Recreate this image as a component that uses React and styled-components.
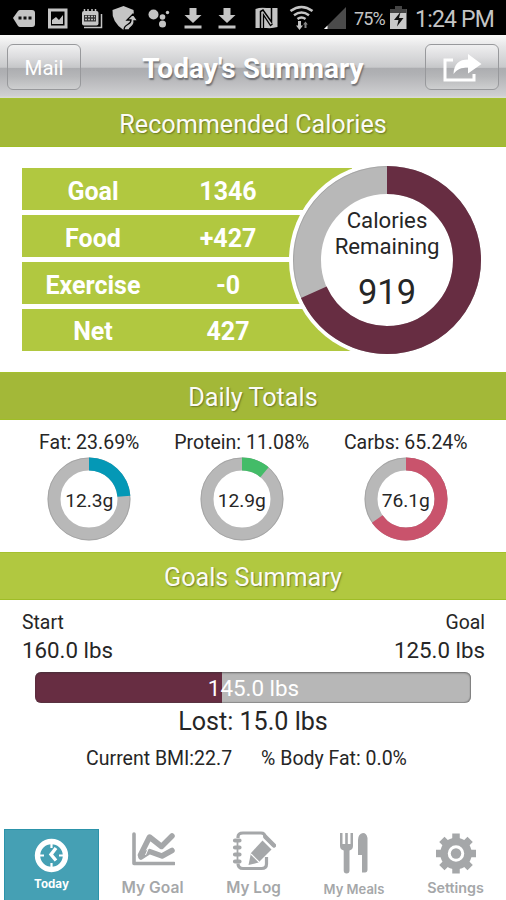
import React from "react";
import styled, { createGlobalStyle } from "styled-components";

const GlobalStyle = createGlobalStyle`
  * { box-sizing: border-box; }
  body { margin: 0; background: #fff; }
`;

const Screen = styled.div`
  width: 506px;
  height: 900px;
  display: flex;
  flex-direction: column;
  overflow: hidden;
  background: #fff;
  color: #262626;
  font-family: Roboto, "Liberation Sans", sans-serif;
`;

const Label = styled.span`
  display: block;
  white-space: nowrap;
  font-size: ${(p) => p.$size}px;
  line-height: ${(p) => p.$line || p.$size}px;
  font-weight: ${(p) => p.$weight || 400};
  letter-spacing: ${(p) => p.$track || 0}px;
`;

const StatusBar = styled.div`
  height: 35px;
  flex: none;
  display: flex;
  background: #000;
  color: #c4c4c4;
`;

const StatusIcons = styled.svg`
  flex: none;
  display: block;
`;

const StatusText = styled.div`
  padding-top: ${(p) => p.$top}px;
  width: ${(p) => p.$width}px;
`;

const Toolbar = styled.header`
  height: 63px;
  flex: none;
  display: flex;
  justify-content: space-between;
  padding: 9px 7px 0;
  background: linear-gradient(#fafafa 0, #e6e6e7 18%, #c9cacc 51%, #acadb0 53%, #b0b1b4 62%, #cfcfd1 96%, #dcdcd6 100%);
`;

const ToolButton = styled.button`
  width: 74px;
  height: 46px;
  padding: 2px 0 0;
  display: flex;
  align-items: center;
  justify-content: center;
  border: 1.5px solid #98999c;
  border-radius: 6px;
  color: #fff;
  font-family: inherit;
  background: linear-gradient(#f0f0f1 0, #dcdcde 28%, #c6c7c9 51%, #acadb0 53%, #b6b7b9 72%, #cecfd0 100%);
`;

const Title = styled.h1`
  margin: 0;
  padding-top: 9px;
  color: #fff;
  text-shadow: 1px 1.5px 1.5px rgba(70, 70, 75, 0.65);
`;

const SectionHeader = styled.h2`
  height: ${(p) => p.$height || 48}px;
  flex: none;
  margin: 0;
  display: flex;
  align-items: center;
  justify-content: center;
  padding-top: 4px;
  color: #fbfbf6;
  background: ${(p) => p.$color || "#a3b838"};
  border-top: 1px solid #a5c02f;
  border-bottom: 1px solid #9fbd27;
  text-shadow: 1px 1px 1.5px rgba(60, 70, 20, 0.55);
`;

const Calories = styled.section`
  height: 225px;
  flex: none;
  display: flex;
  padding: 17px 0 0 22px;
`;

const CalorieTable = styled.div`
  width: 330px;
  flex: none;
  display: flex;
  flex-direction: column;
  gap: 4.7px;
  padding-top: 4px;
`;

const CalorieRow = styled.div`
  height: 42.2px;
  display: grid;
  grid-template-columns: 142px 128px;
  align-items: center;
  justify-items: center;
  padding-top: 4.500px;
  color: #fff;
  background: #b1c840;
`;

const CalorieDial = styled.div`
  position: relative;
  width: 196px;
  height: 196px;
  flex: none;
  margin: -2px 0 0 -63px;
`;

const Ring = styled.svg`
  display: block;
`;

const DialText = styled.div`
  position: absolute;
  inset: 0;
  display: flex;
  flex-direction: column;
  align-items: center;
  justify-content: ${(p) => (p.$top ? "flex-start" : "center")};
  padding-top: ${(p) => p.$top || 4}px;
`;

const Macros = styled.section`
  height: 132px;
  flex: none;
  display: grid;
  grid-template-columns: 152.5px 152.5px 175.5px;
  padding: 12px 0 0 13px;
`;

const Macro = styled.div`
  display: flex;
  flex-direction: column;
  align-items: center;
  gap: 3px;
`;

const MacroDial = styled.div`
  position: relative;
  width: 84px;
  height: 84px;
`;

const Goals = styled.section`
  flex: 1;
  display: flex;
  flex-direction: column;
  align-items: center;
  padding-top: 10px;
`;

const Weights = styled.div`
  align-self: stretch;
  display: flex;
  justify-content: space-between;
  padding: 0 21px 0 22px;
`;

const Weight = styled.div`
  display: flex;
  flex-direction: column;
  align-items: ${(p) => (p.$end ? "flex-end" : "flex-start")};
`;

const Progress = styled.div`
  width: 436px;
  height: 31px;
  margin-top: 7px;
  display: flex;
  align-items: center;
  justify-content: center;
  padding: 2px 0 0 1px;
  color: #fff;
  border-radius: 6px;
  background: linear-gradient(90deg, #672d42 ${(p) => p.$value}%, #b7b7b7 ${(p) => p.$value}%);
  box-shadow: inset 0 1px 2px rgba(50, 50, 50, 0.6), inset -1px -1px 1px rgba(70, 70, 70, 0.35);
`;

const Stats = styled.div`
  display: flex;
  gap: 29px;
  margin-top: 8px;
  margin-left: -13px;
`;

const TabBar = styled.nav`
  height: 72px;
  flex: none;
  display: grid;
  grid-template-columns: 95px 107px 95px 106px 97px;
  padding: 1px 0 0 4px;
  color: #a5a7a9;
`;

const Tab = styled.div`
  display: flex;
  flex-direction: column;
  align-items: center;
  font-family: Inter, Roboto, sans-serif;
  color: ${(p) => (p.$active ? "#fff" : "inherit")};
  background: ${(p) => (p.$active ? "#45a0b4" : "transparent")};
  border: ${(p) => (p.$active ? "1px solid #2c93aa" : "0")};
  border-bottom: 0;
`;

const TabIcon = styled.svg`
  display: block;
  flex: none;
`;

function Donut({ size, radius, inner, value, color, halo }) {
  const c = size / 2;
  const mid = (radius + inner) / 2;
  const len = 2 * Math.PI * mid;
  const common = { cx: c, cy: c, r: mid, fill: "none", strokeWidth: radius - inner };
  return (
    <Ring width={size} height={size}>
      {halo && <circle cx={c} cy={c} r={c} fill="#fff" />}
      <circle {...common} stroke="#b8b8b8" />
      <circle cx={c} cy={c} r={radius - 0.5} fill="none" stroke="#8f8f8f" strokeOpacity=".45" />
      <circle
        {...common}
        stroke={color}
        strokeDasharray={`${len * value} ${len}`}
        transform={`rotate(-90 ${c} ${c})`}
      />
    </Ring>
  );
}

function NotificationIcons() {
  return (
    <StatusIcons width="354" height="35" fill="#c4c4c4">
      <path d="M13 18l5-7q1-1 2-1h12q3 0 3 3v11q0 3-3 3H20q-1 0-2-1z" />
      <path d="M18.500 16.500h3v3h-3zM23.500 16.500h3v3h-3zM28.500 16.500h3v3h-3z" fill="#111" />
      <path d="M49.500 10h16.500v17H49.500z" fill="none" stroke="#c4c4c4" strokeWidth="3" />
      <path d="M52 24v-4l4-3 3 3 4-5v9z" />
      <rect x="82" y="11" width="16.500" height="14.500" rx="2" />
      <path d="M84.500 9v4M88 9v4M92 9v4M95.500 9v4" stroke="#c4c4c4" strokeWidth="1.500" />
      <path d="M84 15h12v6.500H84z" fill="#333" />
      <path d="M85 16.500h10M85 19.500h10" stroke="#bbb" strokeWidth="1.500" strokeDasharray="2 1" />
      <path d="M84 27.500h17.500V14" fill="none" stroke="#c4c4c4" strokeWidth="1.500" />
      <path d="M123.500 6l10 4q2 12-10 20-12-8-11-20z" />
      <path d="M124 30c0-7 7-4 7-10h-4l6-6 5 7h-4c1 6-4 5-5 9z" stroke="#000" strokeWidth="1.300" />
      <circle cx="153.500" cy="14.500" r="5" /><circle cx="162.500" cy="17" r="2.800" />
      <circle cx="162.500" cy="24" r="3.500" /><circle cx="167.500" cy="12.500" r="1.700" />
      <path d="M189.500 8h7v7h5L193 23l-8.500-8h5zM184.500 25.500h17v3h-17z" />
      <path d="M223.500 8h7v7h5L227 23l-8.500-8h5zM218.500 25.500h17v3h-17z" />
      <path d="M255.500 9q5-2 11-1h11v19q-5 1.500-11 1h-11z" />
      <path d="M260.500 28V11.500L263 10l8.500 12V8" fill="none" stroke="#000" strokeWidth="1.500" />
      <path d="M263.500 28V15l7 10.500 2-1.500" fill="none" stroke="#000" strokeWidth="1.300" />
      <g fill="none" stroke="#c4c4c4" strokeWidth="2.500">
        <path d="M290.500 11q11-8 22 0M294 15.200q7.500-5.500 15 0M297.500 19q4-3 8 0" />
      </g>
      <path d="M298 21h3v4.500h2l-3.500 4.500-3.500-4.500h2z" />
      <path d="M304.500 28v-3.500H303l2.500-3 2.300 3h-1.300V28z" fill="#888" />
      <path d="M346 7v22h-22z" fill="#4b4b4b" />
      <path d="M327.500 25.500V29H324z" fill="#fff" />
    </StatusIcons>
  );
}

function TodayIcon() {
  return (
    <TabIcon width="42" height="46" fill="none" stroke="currentColor">
      <circle cx="20.500" cy="25.500" r="14" strokeWidth="5.400" />
      <path d="M20.500 13v5M20.500 33v5M8 25.500h5M28 25.500h5" strokeWidth="2.200" />
      <path d="M25 18l-5 6.500 5 6" strokeWidth="3.400" />
    </TabIcon>
  );
}

function GoalIcon() {
  return (
    <TabIcon width="44" height="46" fill="none" stroke="currentColor">
      <path d="M3 5v29.500H43" strokeWidth="3.600" strokeLinejoin="round" strokeLinecap="round" />
      <path d="M9.500 26L18.500 8l12 9.500L41 7" strokeWidth="5.500" strokeLinecap="round" strokeLinejoin="round" />
      <path d="M10 28l8.500-5.500L31 27l10-5.500" strokeWidth="5.500" strokeLinecap="round" strokeLinejoin="round" />
      <path d="M14.500 26l3-7" stroke="#fff" strokeWidth="1" />
    </TabIcon>
  );
}

function LogIcon() {
  return (
    <TabIcon width="44" height="46" fill="none" stroke="currentColor">
      <path d="M6 9V8q0-4 5-4h18q4 0 4 4M34.500 28v7q0 4.500-5 4.500H11q-5 0-5-5" strokeWidth="3.200" />
      <path d="M5.500 12v22" strokeWidth="1.800" />
      <path d="M3 11.500h4.500M3 18.500h4.500M3 25.500h4.500M3 32.500h4.500" strokeWidth="4.200" strokeLinecap="round" />
      <path d="M30.500 11.500l9 9-13 13-10 2.500 2.500-12z" fill="currentColor" stroke="none" />
      <path d="M33.500 8l8.500 8.500" strokeWidth="4.500" strokeLinecap="round" />
      <path d="M19 25l8 8" stroke="#fff" strokeWidth="1.200" />
    </TabIcon>
  );
}

function MealsIcon() {
  return (
    <TabIcon width="32" height="46" fill="currentColor">
      <path d="M2 4h2.500v11h2.700V4h2.600v11h2.700V4H15v13q0 3.500-3.500 4.500v20a2.800 2.800 0 0 1-5.800 0v-20Q2 20.500 2 17V4z" />
      <path d="M24 43.500h3q2.500 0 2.500-3V9q-1-5-4.500-5-5 1-5 7v15h4z" />
    </TabIcon>
  );
}

function SettingsIcon() {
  return (
    <TabIcon width="42" height="46" fill="none" stroke="currentColor">
      <g transform="translate(21 24.500)">
        <circle r="12" strokeWidth="7.500" />
        <circle r="5.200" fill="currentColor" stroke="none" />
        {[0, 45, 90, 135].map((a) => (
          <path key={a} d="M0-20v6M0 14v6" strokeWidth="7.500" transform={`rotate(${a})`} />
        ))}
      </g>
    </TabIcon>
  );
}

const rows = [["Goal", "1346"], ["Food", "+427"], ["Exercise", "-0"], ["Net", "427"]];
const macros = [
  { text: "Fat: 23.69%", grams: "12.3g", value: 0.2369, color: "#0498b6" },
  { text: "Protein: 11.08%", grams: "12.9g", value: 0.1108, color: "#43bc68" },
  { text: "Carbs: 65.24%", grams: "76.1g", value: 0.6524, color: "#c9536c" },
];

export default function App() {
  return (
    <Screen>
      <GlobalStyle />
      <StatusBar>
        <NotificationIcons />
        <StatusText $top={10} $width={36}><Label $size={18} $track={-0.9}>75%</Label></StatusText>
        <StatusIcons width="25" height="35">
          <path d="M5 6h7v3h4.500v20H0V9h5z" fill="#c9c9c9" />
          <path d="M5 6h7v3H5zM0 9h16.500v4H0z" fill="#444" />
          <path d="M10.500 12L4 20h4.500L7 26.500l6.500-8.500H9z" fill="#111" />
        </StatusIcons>
        <StatusText $top={8} $width={91}><Label $size={23} $track={-0.8}>1:24 PM</Label></StatusText>
      </StatusBar>
      <Toolbar>
        <ToolButton><Label $size={20.5}>Mail</Label></ToolButton>
        <Title><Label $size={28} $weight={700} $line={32}>Today's Summary</Label></Title>
        <ToolButton aria-label="Share">
          <svg width="42" height="34" fill="none" stroke="#fff">
            <path d="M12 9H4v20h29v-6" strokeWidth="3" />
            <path d="M12.500 23C13 13 18 8.500 27 8.500V3l13.500 10L27 22.500V16.500c-7 0-11 2-14.500 6.500z" fill="#fff" stroke="none" />
          </svg>
        </ToolButton>
      </Toolbar>
      <SectionHeader $height={49}><Label $size={25.2}>Recommended Calories</Label></SectionHeader>
      <Calories>
        <CalorieTable>
          {rows.map(([name, value]) => (
            <CalorieRow key={name}>
              <Label $size={25} $weight={700}>{name}</Label>
              <Label $size={25} $weight={700}>{value}</Label>
            </CalorieRow>
          ))}
        </CalorieTable>
        <CalorieDial>
          <Donut size={196} radius={94} inner={66} value={919 / 1346} color="#672d42" halo />
          <DialText $top={45}>
            <Label $size={22.2} $line={26}>Calories</Label>
            <Label $size={22.2} $line={27}>Remaining</Label>
            <Label $size={34.5} $line={64}>919</Label>
          </DialText>
        </CalorieDial>
      </Calories>
      <SectionHeader><Label $size={25.2}>Daily Totals</Label></SectionHeader>
      <Macros>
        {macros.map((m) => (
          <Macro key={m.text}>
            <Label $size={19.5} $line={22}>{m.text}</Label>
            <MacroDial>
              <Donut size={84} radius={41.5} inner={28.5} value={m.value} color={m.color} />
              <DialText><Label $size={19.2} $line={22}>{m.grams}</Label></DialText>
            </MacroDial>
          </Macro>
        ))}
      </Macros>
      <SectionHeader $color="#b1c840"><Label $size={25.2}>Goals Summary</Label></SectionHeader>
      <Goals>
        <Weights>
          <Weight>
            <Label $size={19.4} $line={26}>Start</Label>
            <Label $size={22.3} $line={29}>160.0 lbs</Label>
          </Weight>
          <Weight $end>
            <Label $size={19.4} $line={26}>Goal</Label>
            <Label $size={22.3} $line={29}>125.0 lbs</Label>
          </Weight>
        </Weights>
        <Progress $value={42.8}><Label $size={22.4}>145.0 lbs</Label></Progress>
        <Label $size={25.1} $line={38}>Lost: 15.0 lbs</Label>
        <Stats>
          <Label $size={19.5}>Current BMI:22.7</Label>
          <Label $size={19.5}>% Body Fat: 0.0%</Label>
        </Stats>
      </Goals>
      <TabBar>
        <Tab $active><TodayIcon /><Label $size={11.6} $line={17} $weight={700}>Today</Label></Tab>
        <Tab><GoalIcon /><Label $size={15.6} $line={26} $weight={600}>My Goal</Label></Tab>
        <Tab><LogIcon /><Label $size={15.3} $line={26} $weight={600}>My Log</Label></Tab>
        <Tab><MealsIcon /><Label $size={13} $line={28} $weight={600}>My Meals</Label></Tab>
        <Tab><SettingsIcon /><Label $size={14.3} $line={26} $weight={600}>Settings</Label></Tab>
      </TabBar>
    </Screen>
  );
}
